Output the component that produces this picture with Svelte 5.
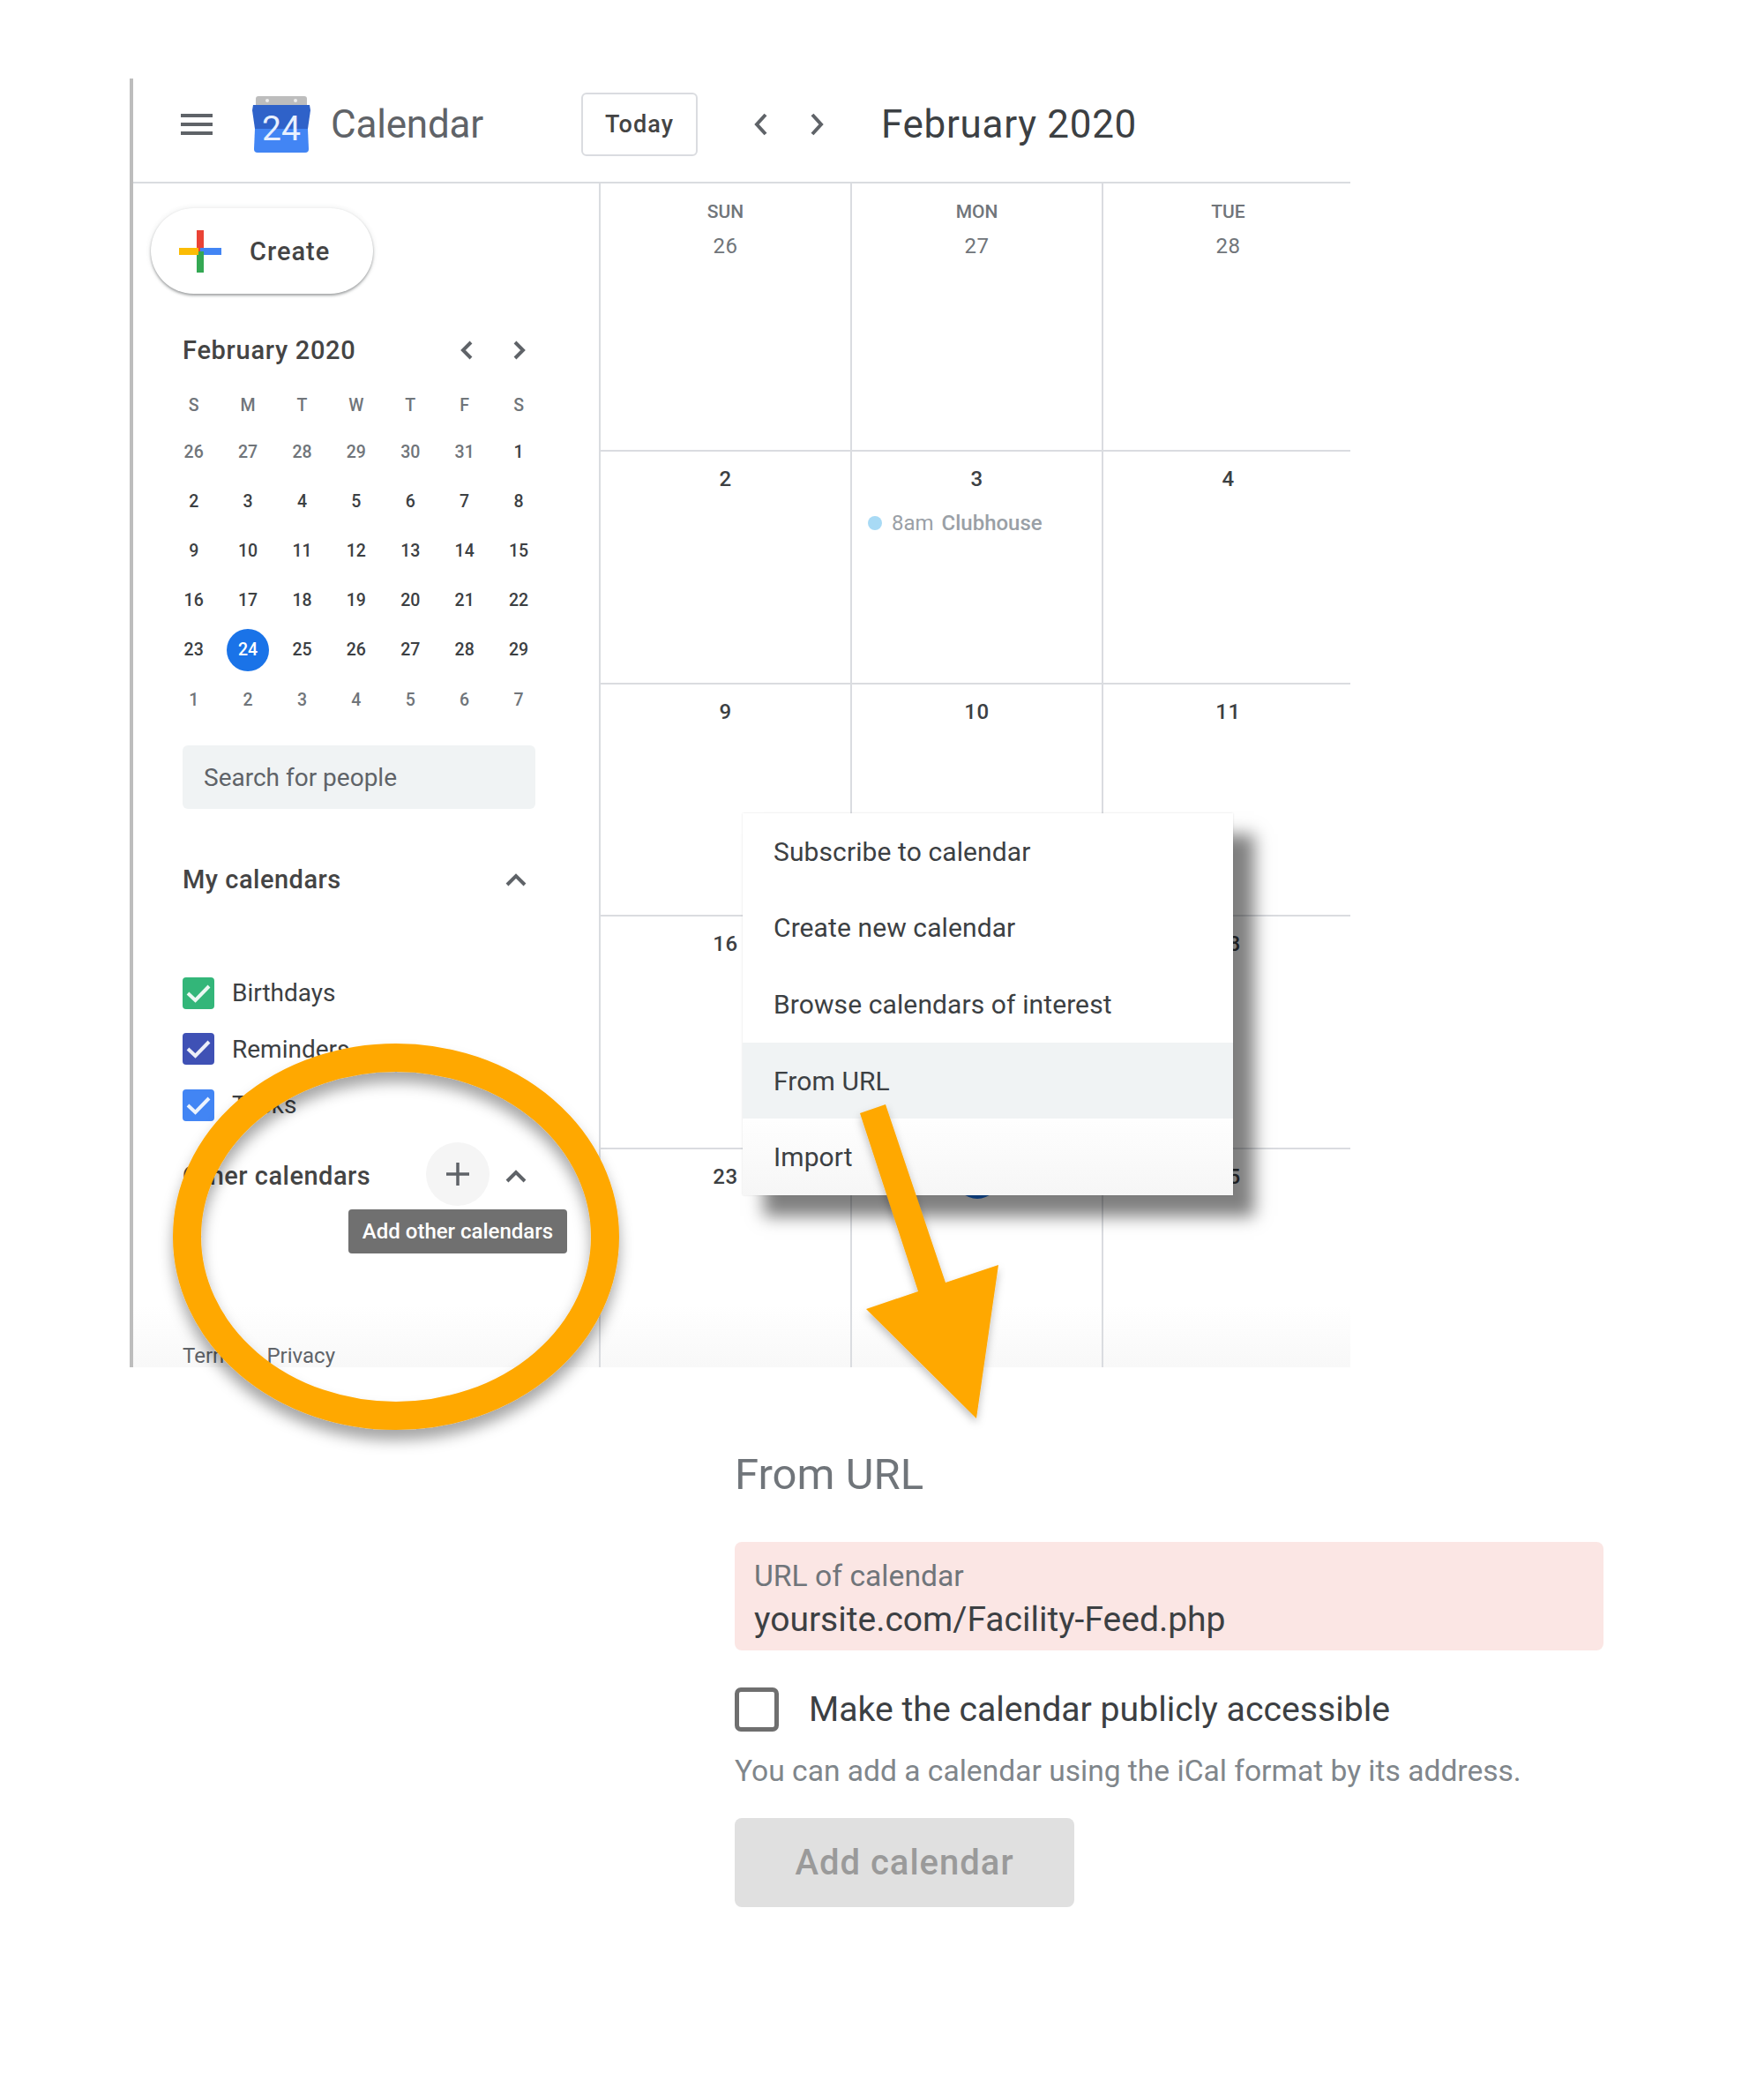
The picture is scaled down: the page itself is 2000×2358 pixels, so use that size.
<script>
	const minidays = ['S', 'M', 'T', 'W', 'T', 'F', 'S'];
	const prevMonth = [26, 27, 28, 29, 30, 31];
	const nextMonth = [1, 2, 3, 4, 5, 6, 7];
	const current = Array.from({ length: 29 }, (_, i) => i + 1);

	const miniCells = [
		...prevMonth.map((n) => ({ n, muted: true })),
		...current.map((n) => ({ n, muted: false })),
		...nextMonth.map((n) => ({ n, muted: true }))
	];

	const calendars = [
		{ name: 'Birthdays', color: '#33b679' },
		{ name: 'Reminders', color: '#3f51b5' },
		{ name: 'Tasks', color: '#4285f4' }
	];

	const weeks = [
		[{ day: 'SUN', n: 26 }, { day: 'MON', n: 27 }, { day: 'TUE', n: 28 }],
		[{ n: 2 }, { n: 3, event: true }, { n: 4 }],
		[{ n: 9 }, { n: 10 }, { n: 11 }],
		[{ n: 16 }, { n: 17 }, { n: 18 }],
		[{ n: 23 }, { n: 24, today: true }, { n: 25 }]
	];

	const menuItems = ['Subscribe to calendar', 'Create new calendar', 'Browse calendars of interest', 'From URL', 'Import'];
</script>

<div class="page">
	<div class="frame">
		<div class="fade"></div>
		<header class="topbar">
			<div class="brand">
				<div class="burger"><span></span><span></span><span></span></div>
				<svg class="logo" width="66" height="64" viewBox="0 0 66 64">
					<path d="M4 3 Q4 0 7 0 H59 Q62 0 62 3 V14 H4 Z" fill="#bdbdbd" />
					<circle cx="17" cy="5" r="2" fill="#eee" />
					<circle cx="49" cy="5" r="2" fill="#eee" />
					<path d="M1 10 H65 L66 16 L63 37 H3 L0 16 Z" fill="#2f62c9" />
					<path d="M3 37 H63 L64 60 Q64 64 60 64 H6 Q2 64 2 60 Z" fill="#4285f4" />
					<text x="33" y="50" class="logo-num">24</text>
				</svg>
				<span class="product">Calendar</span>
			</div>
			<div class="today">Today</div>
			<div class="nav">
				<svg width="20" height="28" viewBox="0 0 20 28"><path d="M15 3 L5 14 L15 25" /></svg>
				<svg width="20" height="28" viewBox="0 0 20 28"><path d="M5 3 L15 14 L5 25" /></svg>
			</div>
			<div class="title">February 2020</div>
		</header>

		<div class="body">
			<aside class="sidebar">
				<div class="create">
					<svg width="48" height="48" viewBox="0 0 48 48">
						<rect x="20" y="0" width="8" height="24" fill="#ea4335" />
						<rect x="24" y="20" width="24" height="8" fill="#4285f4" />
						<rect x="20" y="24" width="8" height="24" fill="#34a853" />
						<rect x="0" y="20" width="22" height="8" fill="#fbbc05" />
					</svg>
					<span>Create</span>
				</div>

				<div class="mini-head">
					<span>February 2020</span>
					<div class="mini-nav">
						<svg width="20" height="24" viewBox="0 0 20 24"><path d="M15 3 L6 12 L15 21" /></svg>
						<svg width="20" height="24" viewBox="0 0 20 24"><path d="M5 3 L14 12 L5 21" /></svg>
					</div>
				</div>

				<div class="mini-grid">
					{#each minidays as d}
						<div class="mini-wd">{d}</div>
					{/each}
					{#each miniCells as c}
						<div class="mini-day" class:muted={c.muted}>
							{#if !c.muted && c.n === 24}
								<span class="mini-today">{c.n}</span>
							{:else}
								{c.n}
							{/if}
						</div>
					{/each}
				</div>

				<div class="search">Search for people</div>

				<div class="section-head my">
					<span>My calendars</span>
					<svg class="caret" width="24" height="16" viewBox="0 0 24 16"><path d="M2 14 L12 4 L22 14" /></svg>
				</div>

				<div class="cal-list">
					{#each calendars as c}
						<div class="cal-row">
							<svg width="36" height="36" viewBox="0 0 36 36">
								<rect width="36" height="36" rx="4" fill={c.color} />
								<path d="M6 18 L14.5 26 L30 10" fill="none" stroke="#fff" stroke-opacity="0.9" stroke-width="4" />
							</svg>
							<span>{c.name}</span>
						</div>
					{/each}
				</div>

				<div class="section-head other">
					<span>Other calendars</span>
					<div class="add">
						<svg width="28" height="28" viewBox="0 0 28 28"><path d="M14 1 V27 M1 14 H27" /></svg>
					</div>
					<svg class="caret" width="24" height="16" viewBox="0 0 24 16"><path d="M2 14 L12 4 L22 14" /></svg>
					<div class="tooltip">Add other calendars</div>
				</div>

				<div class="footer"><span>Terms</span><span>Privacy</span></div>
			</aside>

			<div class="grid">
				{#each weeks as week}
					{#each week as cell}
						<div class="cell">
							{#if cell.day}
								<div class="wd">{cell.day}</div>
								<div class="num first">{cell.n}</div>
							{:else if cell.today}
								<div class="num"><span class="today-dot">{cell.n}</span></div>
							{:else}
								<div class="num">{cell.n}</div>
							{/if}
							{#if cell.event}
								<div class="event"><i></i>8am <b>Clubhouse</b></div>
							{/if}
						</div>
					{/each}
				{/each}
			</div>
		</div>
	</div>

	<div class="menu">
		{#each menuItems as item, i}
			<div class="menu-item" class:active={i === 3}>{item}</div>
		{/each}
	</div>

	<section class="form">
		<h2>From URL</h2>
		<div class="field">
			<div class="field-label">URL of calendar</div>
			<div class="field-value">yoursite.com/Facility-Feed.php</div>
		</div>
		<div class="check-row">
			<div class="box"></div>
			<span>Make the calendar publicly accessible</span>
		</div>
		<p class="hint">You can add a calendar using the iCal format by its address.</p>
		<div class="submit">Add calendar</div>
	</section>

	<!-- annotations drawn over the screenshot -->
	<svg class="annot" width="2000" height="2358" viewBox="0 0 2000 2358">
		<defs>
			<filter id="ringShadow" x="-20%" y="-20%" width="140%" height="140%">
				<feDropShadow dx="0" dy="12" stdDeviation="8" flood-color="#000" flood-opacity="0.35" />
			</filter>
			<filter id="arrowShadow" x="-20%" y="-20%" width="140%" height="140%">
				<feDropShadow dx="0" dy="5" stdDeviation="5" flood-color="#000" flood-opacity="0.25" />
			</filter>
		</defs>
		<ellipse cx="449" cy="1402" rx="237" ry="203" fill="none" stroke="#ffa800" stroke-width="32" filter="url(#ringShadow)" />
		<polygon points="975,1262 1004,1252 1072,1454 1132,1434 1107,1608 982,1484 1041,1464" fill="#ffa800" filter="url(#arrowShadow)" />
	</svg>
</div>

<style>
	:global(body) {
		margin: 0;
		background: #fff;
	}

	.page {
		position: relative;
		width: 2000px;
		height: 2358px;
		overflow: hidden;
		background: #fff;
		font-family: Roboto, "Liberation Sans", sans-serif;
		color: #3c4043;
	}

	.frame {
		position: absolute;
		left: 147px;
		top: 89px;
		width: 1384px;
		height: 1461px;
		box-sizing: border-box;
		border-left: 4px solid #bdbdbd;
		display: flex;
		flex-direction: column;
		overflow: hidden;
	}

	.topbar {
		flex: none;
		padding-bottom: 14px;
		box-sizing: border-box;
		height: 119px;
		border-bottom: 2px solid #dadce0;
		display: flex;
		align-items: center;
		position: relative;
	}

	.brand {
		width: 508px;
		display: flex;
		align-items: center;
		padding-left: 54px;
		box-sizing: border-box;
	}

	.burger {
		width: 36px;
		height: 24px;
		display: flex;
		flex-direction: column;
		justify-content: space-between;
		margin-right: 45px;
	}

	.burger span {
		height: 4px;
		background: #5f6368;
	}

	.logo {
		margin-right: 23px;
		flex: none;
	}

	.logo-num {
		font-size: 39px;
		font-weight: 400;
		fill: #e8f0fe;
		text-anchor: middle;
	}

	.product {
		font-size: 44px;
		color: #5f6368;
		letter-spacing: -0.2px;
	}

	.today {
		width: 132px;
		height: 72px;
		box-sizing: border-box;
		border: 2px solid #dadce0;
		border-radius: 6px;
		display: flex;
		align-items: center;
		justify-content: center;
		font-size: 27px;
		font-weight: 500;
		letter-spacing: 1.1px;
		color: #444;
	}

	.nav {
		display: flex;
		gap: 43px;
		margin-left: 62px;
		margin-right: 63px;
	}

	.nav svg path,
	.mini-nav svg path,
	.caret path {
		fill: none;
		stroke: #5f6368;
		stroke-width: 4;
	}

	.title {
		font-size: 44px;
		letter-spacing: 0.7px;
		color: #3c4043;
	}

	.body {
		flex: 1;
		display: flex;
		min-height: 0;
		position: relative;
	}

	.sidebar {
		width: 528px;
		flex: none;
		display: flex;
		flex-direction: column;
		padding-left: 56px;
		box-sizing: border-box;
		position: relative;
	}

	.create {
		margin: 28px 0 0 -36px;
		width: 252px;
		height: 97px;
		box-sizing: border-box;
		border-radius: 49px;
		background: #fff;
		box-shadow: 0 2px 3px rgba(60, 64, 67, 0.45), 0 0 6px rgba(60, 64, 67, 0.12);
		display: flex;
		align-items: center;
		padding-left: 32px;
		gap: 32px;
		font-size: 29px;
		font-weight: 500;
		letter-spacing: 1px;
		color: #444;
	}

	.mini-head {
		margin-top: 44px;
		height: 40px;
		display: flex;
		align-items: center;
		justify-content: space-between;
		font-size: 29px;
		font-weight: 500;
		letter-spacing: 0.7px;
		width: 392px;
		color: #444;
	}

	.mini-nav {
		display: flex;
		gap: 40px;
	}

	.mini-grid {
		margin: 17px 0 0 -18px;
		width: 430px;
		display: grid;
		grid-template-columns: repeat(7, 61.4px);
		grid-template-rows: 50px repeat(6, 56.2px);
		align-items: center;
		justify-items: center;
		font-size: 19.5px;
		font-weight: 500;
	}

	.mini-wd,
	.mini-day.muted {
		color: #70757a;
	}

	.mini-today {
		width: 48px;
		height: 48px;
		border-radius: 50%;
		background: #1a73e8;
		color: #fff;
		display: flex;
		align-items: center;
		justify-content: center;
	}

	.search {
		margin-top: 24px;
		width: 400px;
		height: 72px;
		box-sizing: border-box;
		padding-left: 24px;
		border-radius: 6px;
		background: #f0f3f4;
		display: flex;
		align-items: center;
		font-size: 28px;
		color: #5f6368;
	}

	.section-head {
		display: flex;
		align-items: center;
		font-size: 29px;
		font-weight: 500;
		letter-spacing: 0.5px;
		position: relative;
		width: 390px;
		color: #444;
	}

	.section-head > span {
		flex: 1;
	}

	.my {
		margin-top: 55px;
		height: 50px;
	}

	.cal-list {
		margin-top: 72px;
		display: flex;
		flex-direction: column;
	}

	.cal-row {
		height: 63.5px;
		display: flex;
		align-items: center;
		gap: 20px;
		font-size: 28px;
	}

	.other {
		margin-top: 12px;
		height: 72px;
	}

	.add {
		width: 72px;
		height: 72px;
		border-radius: 50%;
		background: #f5f5f5;
		display: flex;
		align-items: center;
		justify-content: center;
		margin-right: 18px;
		margin-top: -4px;
	}

	.add path {
		fill: none;
		stroke: #5f6368;
		stroke-width: 3.5;
	}

	.tooltip {
		position: absolute;
		left: 188px;
		top: 74px;
		width: 248px;
		height: 50px;
		border-radius: 4px;
		background: #707070;
		color: #fff;
		display: flex;
		align-items: center;
		justify-content: center;
		font-size: 24px;
		font-weight: 500;
		letter-spacing: 0;
	}

	.footer {
		margin-top: auto;
		height: 26px;
		line-height: 26px;
		display: flex;
		gap: 28px;
		font-size: 24px;
		color: #5f6368;
	}

	.grid {
		flex: 1;
		display: grid;
		grid-template-columns: 285px 285px 285px;
		grid-template-rows: 304px 264px 263px 264px 1fr;
		min-width: 0;
	}

	.cell {
		box-sizing: border-box;
		border-left: 2px solid #dadce0;
		border-bottom: 2px solid #dadce0;
		display: flex;
		flex-direction: column;
		align-items: center;
		padding-top: 16px;
		position: relative;
	}

	.cell:nth-last-child(-n + 3) {
		border-bottom: none;
	}

	.wd {
		font-size: 21px;
		font-weight: 500;
		color: #70757a;
		line-height: 26px;
		margin-top: 3px;
	}

	.num {
		font-size: 24px;
		font-weight: 500;
		line-height: 30px;
		letter-spacing: 0.5px;
	}

	.num.first {
		margin-top: 11px;
		color: #70757a;
		font-weight: 400;
	}

	.today-dot {
		display: flex;
		align-items: center;
		justify-content: center;
		width: 50px;
		height: 50px;
		margin-top: -10px;
		border-radius: 50%;
		background: #1a73e8;
		color: #fff;
	}

	.event {
		align-self: flex-start;
		margin: 21px 0 0 18px;
		display: flex;
		align-items: center;
		font-size: 24px;
		color: #9aa0a6;
		white-space: pre;
	}

	.event i {
		width: 16px;
		height: 16px;
		border-radius: 50%;
		background: #a8daf5;
		margin-right: 11px;
	}

	.event b {
		font-weight: 500;
		margin-left: 3px;
	}

	.fade {
		position: absolute;
		left: 0;
		right: 0;
		bottom: 0;
		height: 70px;
		background: linear-gradient(rgba(245, 245, 245, 0), rgba(245, 245, 245, 0.7));
	}

	.menu {
		position: absolute;
		left: 842px;
		top: 922px;
		width: 556px;
		height: 433px;
		background: linear-gradient(#fff 78%, #f6f6f6);
		box-shadow: 24px 24px 18px rgba(0, 0, 0, 0.5), 0 0 2px rgba(0, 0, 0, 0.12);
		display: flex;
		flex-direction: column;
	}

	.menu-item {
		height: 86.6px;
		display: flex;
		align-items: center;
		padding-left: 35px;
		font-size: 30px;
		letter-spacing: 0.1px;
	}

	.menu-item.active {
		background: #f0f3f4;
	}

	.form {
		position: absolute;
		left: 833px;
		top: 1550px;
		width: 985px;
		display: flex;
		flex-direction: column;
	}

	.form h2 {
		margin: 92px 0 0;
		height: 60px;
		line-height: 60px;
		font-size: 49px;
		font-weight: 400;
		color: #70757a;
	}

	.field {
		margin-top: 46px;
		height: 123px;
		box-sizing: border-box;
		padding: 19px 22px 0;
		border-radius: 8px;
		background: #fbe6e4;
	}

	.field-label {
		font-size: 33.7px;
		line-height: 40px;
		color: #70757a;
	}

	.field-value {
		font-size: 39px;
		line-height: 50px;
		margin-top: 4px;
		color: #3c4043;
	}

	.check-row {
		margin-top: 42px;
		height: 50px;
		display: flex;
		align-items: center;
		gap: 34px;
		font-size: 39.2px;
	}

	.box {
		width: 50px;
		height: 50px;
		box-sizing: border-box;
		border: 5px solid #6f6f6f;
		border-radius: 7px;
	}

	.hint {
		margin: 25px 0 0;
		font-size: 33.6px;
		line-height: 40px;
		color: #80868b;
	}

	.submit {
		margin-top: 33px;
		width: 385px;
		height: 101px;
		border-radius: 8px;
		background: #e0e0e0;
		display: flex;
		align-items: center;
		justify-content: center;
		font-size: 40px;
		font-weight: 500;
		letter-spacing: 1px;
		color: #9a9a9a;
	}

	.annot {
		position: absolute;
		left: 0;
		top: 0;
		pointer-events: none;
	}
</style>
